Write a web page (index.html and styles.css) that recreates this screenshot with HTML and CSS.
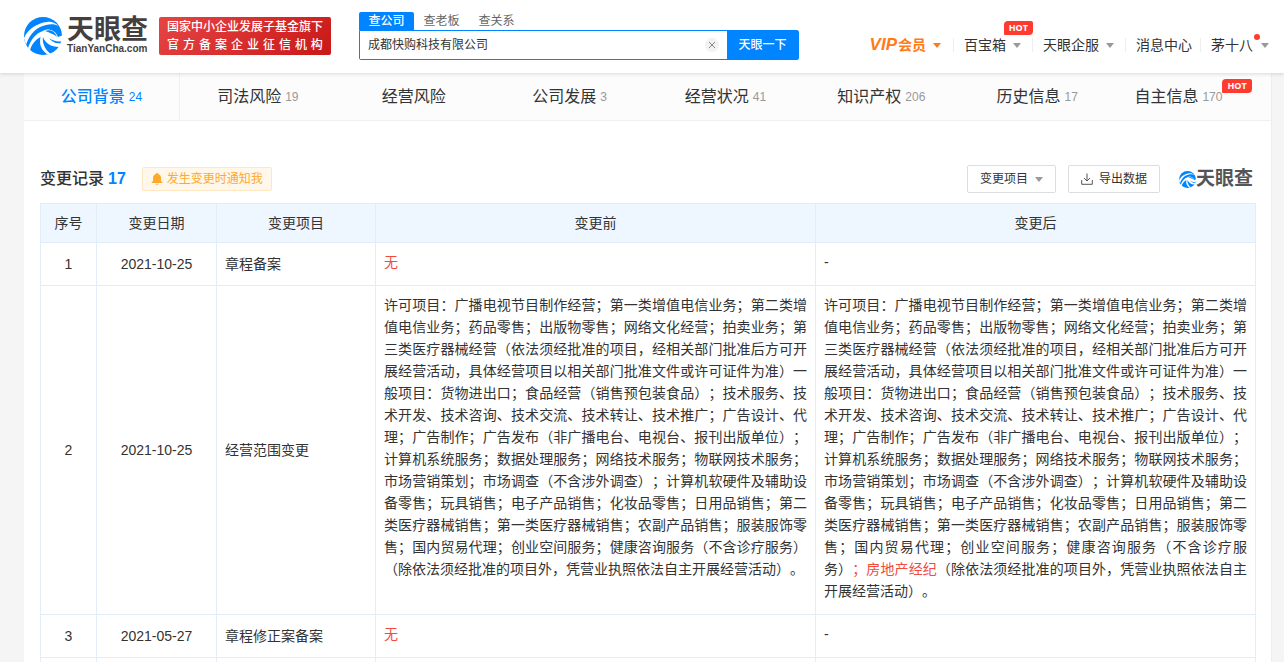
FILE: index.html
```html
<!DOCTYPE html>
<html lang="zh-CN">
<head>
<meta charset="utf-8">
<title>天眼查 - 变更记录</title>
<link rel="stylesheet" href="styles.css">
</head>
<body>
<svg class="defs" aria-hidden="true">
  <symbol id="swirl" viewBox="0 0 38 38">
    <circle cx="19" cy="19" r="19" fill="#0084ff"/>
    <path d="M0 21C4 12 13 6 23 5c4-.5 7 0 12 4-5-2.500-9-2-13-1C13 10 6 16 2 28z" fill="#fff"/>
    <path d="M4 31C7 22 12 16 19 14c3-2 7-2 10 0 3 1.500 4 4 5 6l5-2v6c-5 1-10 0-14-3 3 4 7 6 12 5l-2 4c-8 0-14-4-16-10-1 6 2 13 8 17h-4c-6-4-8-10-6.500-17C11 23 7 28 6 34z" fill="#fff"/>
    <path d="M21 14c5-2 10 0 12 6-3-3-7-4-12-6z" fill="#0084ff"/>
  </symbol>
</svg>
<header class="topbar">
  <a class="logo" href="#">
    <svg class="logo-mark" aria-hidden="true"><use href="#swirl"/></svg>
    <span class="logo-words"><b class="logo-cn">天眼查</b><span class="logo-en">TianYanCha.com</span></span>
  </a>
  <div class="cert"><span>国家中小企业发展子基金旗下</span><span class="cert-wide"><i>官</i><i>方</i><i>备</i><i>案</i><i>企</i><i>业</i><i>征</i><i>信</i><i>机</i><i>构</i></span></div>
  <form class="search">
    <div class="search-tabs">
      <button type="button" class="search-tab current">查公司</button>
      <button type="button" class="search-tab">查老板</button>
      <button type="button" class="search-tab">查关系</button>
    </div>
    <div class="search-row">
      <input class="search-input" type="text" aria-label="搜索公司" value="成都快购科技有限公司">
      <button class="clear" type="button" aria-label="清除"><svg viewBox="0 0 14 14"><path d="M4 4l6 6M10 4l-6 6"/></svg></button>
      <button class="search-go" type="button">天眼一下</button>
    </div>
  </form>
  <nav class="user-nav">
    <a class="vip" href="#"><em>VIP</em>会员<span class="caret"></span></a>
    <a href="#">百宝箱<span class="caret"></span><span class="hot hot-top">HOT</span></a>
    <a href="#">天眼企服<span class="caret"></span></a>
    <a href="#">消息中心</a>
    <a class="account" href="#">茅十八<span class="caret"></span><span class="dot"></span></a>
  </nav>
</header>
<main class="page">
  <nav class="sections">
    <a class="current" href="#">公司背景<span>24</span></a>
    <a href="#">司法风险<span>19</span></a>
    <a href="#">经营风险</a>
    <a href="#">公司发展<span>3</span></a>
    <a href="#">经营状况<span>41</span></a>
    <a href="#">知识产权<span>206</span></a>
    <a href="#">历史信息<span>17</span></a>
    <a href="#">自主信息<span>170</span><b class="hot">HOT</b></a>
  </nav>
  <section class="records">
    <div class="records-head">
      <h2>变更记录<span>17</span></h2>
      <button class="notify" type="button"><svg viewBox="0 0 12 12"><path d="M6 0c.7 0 1 .4 1 1 2 .5 3 2 3 4v3l1.500 1.500v.5h-11v-.5L2 8V5c0-2 1-3.500 3-4 0-.6.300-1 1-1zM4.500 10.700h3L6 12z"/></svg>发生变更时通知我</button>
      <div class="tools">
        <button class="tool" type="button">变更项目<span class="caret"></span></button>
        <button class="tool" type="button"><svg viewBox="0 0 12 12"><path d="M6 .5v7M3 5l3 3 3-3M.7 7v4.300h10.600V7"/></svg>导出数据</button>
        <span class="mini-logo"><svg aria-hidden="true"><use href="#swirl"/></svg>天眼查</span>
      </div>
    </div>
    <table class="changes">
      <colgroup><col class="c-no"><col class="c-date"><col class="c-item"><col><col></colgroup>
      <thead><tr><th>序号</th><th>变更日期</th><th>变更项目</th><th>变更前</th><th>变更后</th></tr></thead>
      <tbody>
        <tr><td class="mid">1</td><td class="mid">2021-10-25</td><td>章程备案</td><td class="detail"><em>无</em></td><td class="detail">-</td></tr>
        <tr><td class="mid">2</td><td class="mid">2021-10-25</td><td>经营范围变更</td>
          <td class="detail">许可项目：广播电视节目制作经营；第一类增值电信业务；第二类增值电信业务；药品零售；出版物零售；网络文化经营；拍卖业务；第三类医疗器械经营（依法须经批准的项目，经相关部门批准后方可开展经营活动，具体经营项目以相关部门批准文件或许可证件为准）一般项目：货物进出口；食品经营（销售预包装食品）；技术服务、技术开发、技术咨询、技术交流、技术转让、技术推广；广告设计、代理；广告制作；广告发布（非广播电台、电视台、报刊出版单位）；计算机系统服务；数据处理服务；网络技术服务；物联网技术服务；市场营销策划；市场调查（不含涉外调查）；计算机软硬件及辅助设备零售；玩具销售；电子产品销售；化妆品零售；日用品销售；第二类医疗器械销售；第一类医疗器械销售；农副产品销售；服装服饰零售；国内贸易代理；创业空间服务；健康咨询服务（不含诊疗服务）（除依法须经批准的项目外，凭营业执照依法自主开展经营活动）。</td>
          <td class="detail">许可项目：广播电视节目制作经营；第一类增值电信业务；第二类增值电信业务；药品零售；出版物零售；网络文化经营；拍卖业务；第三类医疗器械经营（依法须经批准的项目，经相关部门批准后方可开展经营活动，具体经营项目以相关部门批准文件或许可证件为准）一般项目：货物进出口；食品经营（销售预包装食品）；技术服务、技术开发、技术咨询、技术交流、技术转让、技术推广；广告设计、代理；广告制作；广告发布（非广播电台、电视台、报刊出版单位）；计算机系统服务；数据处理服务；网络技术服务；物联网技术服务；市场营销策划；市场调查（不含涉外调查）；计算机软硬件及辅助设备零售；玩具销售；电子产品销售；化妆品零售；日用品销售；第二类医疗器械销售；第一类医疗器械销售；农副产品销售；服装服饰零售；国内贸易代理；创业空间服务；健康咨询服务（不含诊疗服务）<em>；房地产经纪</em>（除依法须经批准的项目外，凭营业执照依法自主开展经营活动）。</td></tr>
        <tr><td class="mid">3</td><td class="mid">2021-05-27</td><td>章程修正案备案</td><td class="detail"><em>无</em></td><td class="detail">-</td></tr>
        <tr><td></td><td></td><td></td><td></td><td></td></tr>
      </tbody>
    </table>
  </section>
</main>
</body>
</html>
```
FILE: styles.css
```css
* { box-sizing: border-box; }
html { height: 100%; overflow: hidden; }
body {
  height: 100%;
  margin: 0;
  overflow: hidden;
  background: #f5f5f5;
  color: #333;
  font: 14px/22px "Liberation Sans", "Noto Sans CJK SC", sans-serif;
  text-spacing-trim: space-all;
}
a { color: inherit; text-decoration: none; }
em, i { font-style: normal; }
button { padding: 0; border: 0; background: none; color: inherit; font: inherit; }
.defs { position: absolute; width: 0; height: 0; }

.topbar {
  position: relative;
  display: flex;
  align-items: flex-start;
  height: 73px;
  padding: 0 15px 0 24px;
  background: #fff;
  box-shadow: 0 1px 4px rgba(0, 0, 0, .14);
}
.logo { display: flex; gap: 5px; margin-top: 17px; }
.logo-mark { width: 38px; height: 38px; }
.logo-words { display: flex; flex-direction: column; width: 80px; color: #463f40; white-space: nowrap; }
.logo-cn { font-size: 27px; line-height: 26px; font-weight: 700; }
.logo-en { font: bold 10px/12px "Liberation Sans", sans-serif; }
.cert {
  display: flex;
  flex-direction: column;
  width: 172px;
  height: 38px;
  margin: 17px 0 0 12px;
  padding: 1px 8px;
  border-radius: 2px;
  background: linear-gradient(135deg, #e64444, #c91818);
  color: #fff;
  font-size: 12px;
  font-weight: 500;
  line-height: 18px;
  white-space: nowrap;
}
.cert-wide { display: flex; justify-content: space-between; }

.search { width: 440px; margin: 12px 0 0 28px; }
.search-tabs { display: flex; font-size: 12px; line-height: 18px; color: #666; }
.search-tab { width: 55px; height: 18px; }
.search-tab.current { border-radius: 2px 2px 0 0; background: #0084ff; color: #fff; font-weight: 500; }
.search-row { display: flex; align-items: center; height: 30px; border: 1px solid #0084ff; border-radius: 0 2px 2px 2px; }
.search-input { flex: 1; min-width: 0; padding: 0 8px; border: 0; outline: 0; color: #333; font: 12px/28px "Liberation Sans", "Noto Sans CJK SC", sans-serif; }
.clear { width: 14px; height: 14px; margin-right: 8px; border-radius: 7px; background: #f2f2f2; }
.clear svg { display: block; stroke: #888; fill: none; }
.search-go { width: 71px; height: 28px; background: #0084ff; color: #fff; font-size: 12px; font-weight: 500; }

.user-nav { display: flex; margin: 34px 0 0 auto; white-space: nowrap; }
.user-nav a { position: relative; display: flex; align-items: center; padding: 0 11px 0 10px; }
.user-nav a + a::before { content: ""; align-self: center; width: 1px; height: 14px; margin: 0 10px 0 -10px; background: #eee; }
.user-nav a:last-child { padding-right: 0; }
.user-nav a:nth-last-child(2) { padding-right: 8px; }
.caret { width: 0; margin-left: 7px; border: 4px solid transparent; border-top: 5px solid #999; border-bottom: 0; }
.vip { color: #ff7a1a; font-weight: 700; }
.vip em { margin-right: 1px; font-style: italic; font-size: 17px; }
.user-nav .vip { padding-right: 12px; }
.vip .caret { border-top-color: #ff7a1a; }
.hot {
  padding: 0 5px;
  border-radius: 4px 2px 4px 1px;
  background: #ff3b30;
  color: #fff;
  font: bold 9px/14px "Open Sans", sans-serif;
}
.hot-top { position: absolute; top: -13px; right: -1px; }
.account .caret { margin-left: 8px; }
.dot { position: absolute; top: 0; right: 9px; width: 6px; height: 6px; border-radius: 3px; background: #ff3b30; }

.page { margin: 0 12px 0 24px; border: solid #eee; border-width: 0 1px 0 0; background: #fff; }
.sections { display: grid; grid-template-columns: repeat(8, 1fr); height: 48px; border-bottom: 1px solid #f0f0f0; background: #fcfcfc; }
.sections a { display: flex; align-items: center; justify-content: center; font-size: 16px; }
.sections span { margin-left: 4px; color: #999; font-size: 12px; }
.sections .current { border-right: 1px solid #f0f0f0; color: #0084ff; font-weight: 500; }
.sections .current span { color: #0084ff; font-weight: 400; }
.sections .hot { align-self: flex-start; margin-top: 6px; }

.records { padding: 44px 15px 0 16px; }
.records-head { display: flex; align-items: center; height: 28px; margin-bottom: 10px; }
h2 { margin: 0; font-size: 16px; font-weight: 500; }
h2 span { margin-left: 4px; color: #0084ff; font-weight: 700; }
.notify {
  display: flex;
  align-items: center;
  gap: 4px;
  height: 24px;
  margin-left: 16px;
  padding: 0 8px;
  border: 1px solid #ffe7c2;
  border-radius: 2px;
  background: #fff7ea;
  color: #ffa928;
  font-size: 12px;
}
.notify svg { width: 12px; height: 12px; fill: #ffa928; }
.tools { display: flex; align-items: center; gap: 12px; margin-left: auto; padding-right: 3px; }
.tool { display: flex; align-items: center; height: 28px; padding: 0 12px; border: 1px solid #ddd; border-radius: 2px; font-size: 12px; }
.tool .caret { margin-left: 7px; }
.tool svg { width: 12px; height: 12px; margin-right: 6px; fill: none; stroke: #555; }
.mini-logo { display: flex; align-items: center; margin-left: 7px; color: #555; font-size: 19px; font-weight: 700; }
.mini-logo svg { width: 17px; height: 17px; }

.changes { width: 100%; border-collapse: collapse; table-layout: fixed; }
.c-no { width: 56px; }
.c-date { width: 120px; }
.c-item { width: 159px; }
th, td { padding: 10px 8px; border: 1px solid #e1edf8; }
th { height: 39px; padding: 0; background: #eef6ff; font-weight: 400; }
td { height: 43px; }
.mid { text-align: center; }
.detail { padding: 8px 8px 12px; vertical-align: top; text-align: justify; }
.changes em { color: #f04b3c; }
```
